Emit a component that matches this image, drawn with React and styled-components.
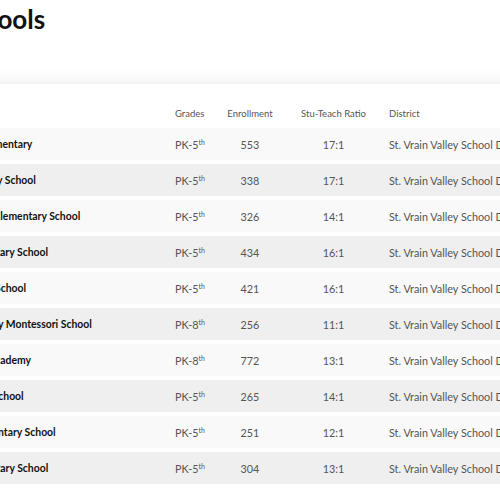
import React from "react";
import styled, { createGlobalStyle } from "styled-components";

const GlobalStyle = createGlobalStyle`
  body {
    margin: 0;
    background: #fff;
    overflow: hidden;
    font-family: Lato, "Liberation Sans", sans-serif;
  }
`;

const Page = styled.div`
  width: 760px;
  margin-left: -113px;
  padding-top: 6px;
`;

const Title = styled.h1`
  margin: 0 0 0 69px;
  font-size: 26px;
  line-height: 26px;
  font-weight: 700;
  color: #111;
`;

const Card = styled.div`
  margin-top: 52px;
  background: #fff;
  box-shadow: 0 0 16px rgba(0, 0, 0, 0.1);
  padding: 20px 0 4px 22px;
`;

const Grid = styled.div`
  display: grid;
  grid-template-columns: 266px 47px 56px 111px 1fr;
  align-items: center;
  height: ${(p) => (p.$head ? "18px" : "32px")};
  margin-bottom: ${(p) => (p.$head ? "6px" : "4px")};
  margin-left: ${(p) => (p.$head ? "0" : "-22px")};
  padding-left: ${(p) => (p.$head ? "0" : "22px")};
  background: ${(p) => (p.$head ? "transparent" : p.$odd ? "#efefef" : "#f9f9f9")};
  font-size: ${(p) => (p.$head ? "9.5px" : "10.8px")};
  color: #555;
  white-space: nowrap;
`;

const Name = styled.div`
  font-size: 10.4px;
  font-weight: 700;
  color: #111;
`;

const Cell = styled.div`
  text-align: ${(p) => (p.$center ? "center" : "left")};
`;

const Sup = styled.sup`
  font-size: 7px;
  vertical-align: 4px;
  line-height: 0;
`;

const schools = [
  ["Blue Mountain Elementary", "5", 553, "17:1"],
  ["Hygiene Elementary School", "5", 338, "17:1"],
  ["Longmont Estates Elementary School", "5", 326, "14:1"],
  ["Black Rock Elementary School", "5", 434, "16:1"],
  ["Niwot Elementary School", "5", 421, "16:1"],
  ["St. Vrain Community Montessori School", "8", 256, "11:1"],
  ["Flagstaff Charter Academy", "8", 772, "13:1"],
  ["Lyons Elementary School", "5", 265, "14:1"],
  ["Indian Peaks Elementary School", "5", 251, "12:1"],
  ["Northridge Elementary School", "5", 304, "13:1"],
];

export default function App() {
  return (
    <Page>
      <GlobalStyle />
      <Title>Schools</Title>
      <Card>
        <Grid $head>
          <Cell />
          <Cell>Grades</Cell>
          <Cell $center>Enrollment</Cell>
          <Cell $center>Stu-Teach Ratio</Cell>
          <Cell>District</Cell>
        </Grid>
        {schools.map(([name, grade, enroll, ratio], i) => (
          <Grid key={name} $odd={i % 2 === 1}>
            <Name>{name}</Name>
            <Cell>
              PK-{grade}
              <Sup>th</Sup>
            </Cell>
            <Cell $center>{enroll}</Cell>
            <Cell $center>{ratio}</Cell>
            <Cell>St. Vrain Valley School District RE-1J</Cell>
          </Grid>
        ))}
      </Card>
    </Page>
  );
}
